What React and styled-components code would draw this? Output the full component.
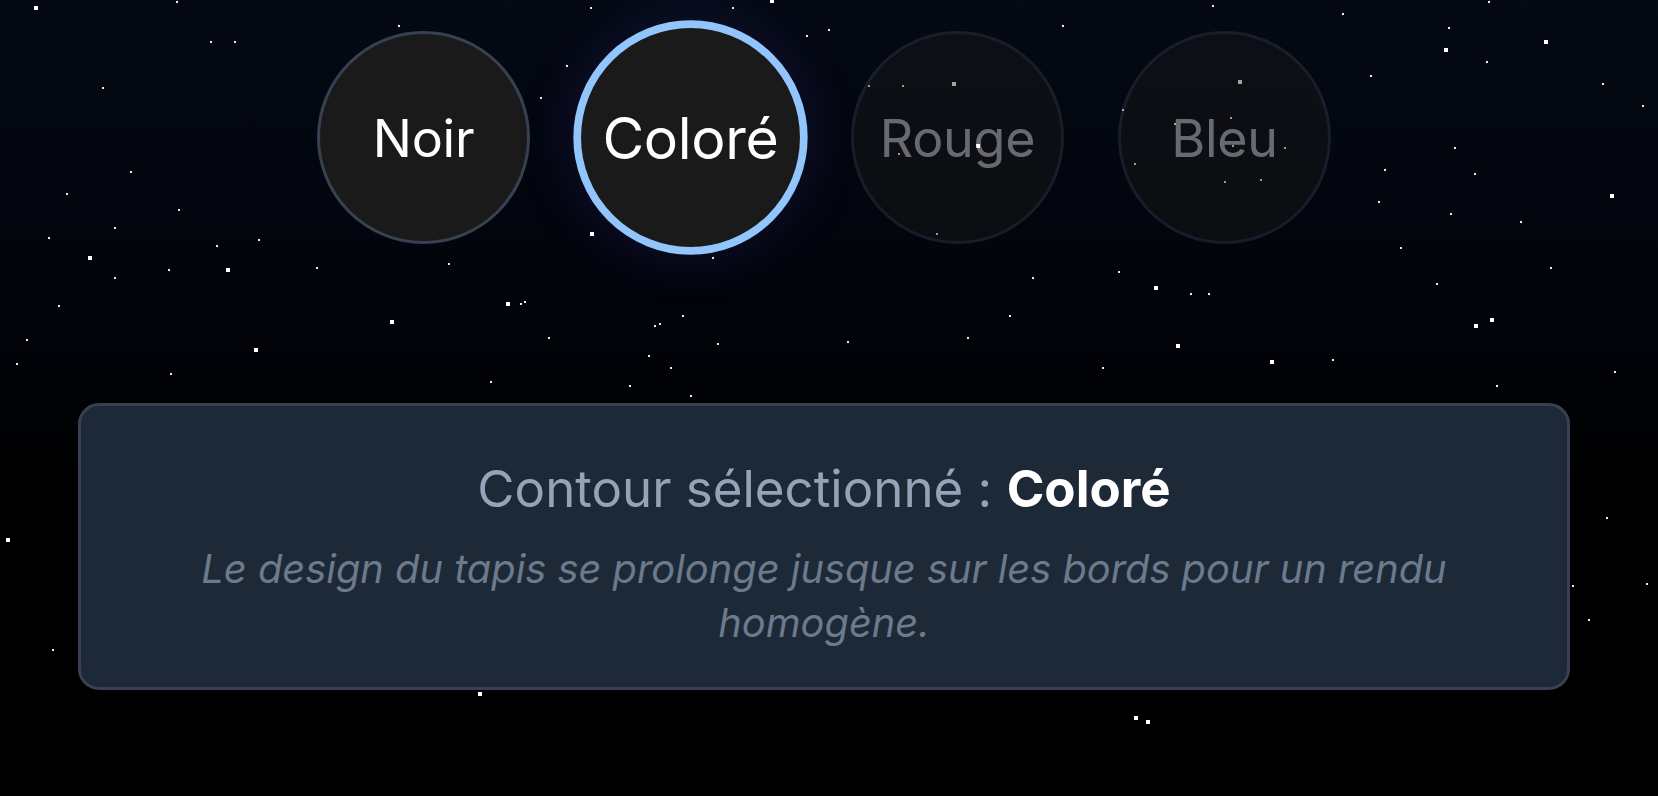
import React from 'react';
import styled, { createGlobalStyle } from 'styled-components';

const GlobalStyle = createGlobalStyle`
  html, body {
    margin: 0;
    padding: 0;
    background: #000;
    overflow: hidden;
  }
`;

const Page = styled.div`
  position: relative;
  box-sizing: border-box;
  height: 796px;
  padding: 31px 88px 0 78px;
  background: linear-gradient(to bottom, #040913 0%, #02040b 40%, #000 62%);
  font-family: Inter, 'Liberation Sans', sans-serif;
  overflow: hidden;
`;

const StarField = styled.svg`
  position: absolute;
  top: 0;
  left: 0;
  width: 1658px;
  height: 796px;
`;

const Content = styled.div`
  position: relative;
`;

const Options = styled.div`
  display: flex;
  justify-content: center;
  gap: 54px;
`;

const Option = styled.button`
  box-sizing: border-box;
  width: 213px;
  height: 213px;
  padding: 2px 0 0;
  border-radius: 50%;
  border: ${(p) => (p.$selected ? '7px solid #93c5fd' : '3px solid #374151')};
  background: #1a1a1a;
  color: #fff;
  font-family: inherit;
  font-size: 52px;
  font-weight: 400;
  letter-spacing: -0.3px;
  opacity: ${(p) => (p.$disabled ? 0.4 : 1)};
  transform: ${(p) => (p.$selected ? 'scale(1.1)' : 'none')};
  box-shadow: ${(p) => (p.$selected ? '0 0 52px rgba(80, 60, 190, 0.2)' : 'none')};
`;

const Summary = styled.div`
  box-sizing: border-box;
  height: 287px;
  margin-top: 159px;
  padding: 53px 60px 0;
  border: 3px solid #374151;
  border-radius: 21px;
  background: #1e2937;
  text-align: center;
`;

const Title = styled.p`
  margin: 0;
  color: #94a3b8;
  font-size: 51px;
  line-height: 60px;
`;

const Strong = styled.strong`
  color: #fff;
  font-weight: 700;
`;

const Note = styled.p`
  margin: 23px 0 0;
  color: #6b7a8c;
  font-size: 39.8px;
  line-height: 54px;
  font-style: italic;
`;

const bigStars = [
  [36, 8], [90, 258], [228, 270], [256, 350], [772, 1], [592, 234], [954, 84],
  [978, 146], [1240, 82], [1546, 42], [1446, 50], [1612, 196], [1492, 320],
  [1476, 326], [508, 304], [392, 322], [1156, 288], [1178, 346], [1272, 362],
  [480, 694], [1136, 718], [1148, 722], [8, 540],
];

const smallStars = [
  [177, 2], [211, 42], [235, 42], [103, 88], [131, 172], [67, 194], [179, 210],
  [115, 228], [49, 238], [259, 240], [217, 246], [169, 270], [115, 278], [59, 306],
  [27, 340], [17, 364], [171, 374], [399, 26], [591, 8], [733, 8], [807, 36],
  [829, 30], [567, 66], [541, 98], [713, 258], [317, 268], [449, 264], [1213, 6],
  [1343, 14], [1063, 26], [869, 86], [903, 86], [899, 154], [937, 234], [1371, 76],
  [1123, 110], [1175, 124], [1231, 118], [1233, 146], [1285, 148], [1135, 164],
  [1225, 182], [1261, 180], [1379, 202], [1033, 278], [1119, 272], [1489, 2],
  [1449, 28], [1487, 62], [1603, 84], [1643, 106], [1455, 148], [1385, 170],
  [1475, 174], [1451, 214], [1521, 222], [1401, 248], [1551, 268], [1437, 284],
  [1333, 360], [1615, 372], [1497, 386], [521, 304], [525, 302], [549, 338],
  [683, 316], [660, 324], [655, 326], [718, 344], [649, 356], [671, 368], [630, 386],
  [691, 396], [491, 382], [848, 342], [1010, 316], [968, 338], [1191, 294],
  [1209, 294], [1103, 368], [53, 650], [1607, 518], [1573, 586], [1647, 584],
  [1589, 620],
];

const contours = [
  { name: 'Noir' },
  { name: 'Coloré', selected: true },
  { name: 'Rouge', disabled: true },
  { name: 'Bleu', disabled: true },
];

export default function App() {
  return (
    <Page>
      <GlobalStyle />
      <StarField viewBox="0 0 1658 796">
        {bigStars.map(([x, y]) => (
          <rect key={`b${x}-${y}`} x={x - 2} y={y - 2} width="4" height="4" fill="#fff" />
        ))}
        {smallStars.map(([x, y]) => (
          <rect key={`s${x}-${y}`} x={x - 1} y={y - 1} width="2" height="2" fill="#eee" />
        ))}
      </StarField>
      <Content>
        <Options>
          {contours.map((item) => (
            <Option key={item.name} $selected={item.selected} $disabled={item.disabled}>
              {item.name}
            </Option>
          ))}
        </Options>
        <Summary>
          <Title>
            Contour sélectionné : <Strong>Coloré</Strong>
          </Title>
          <Note>Le design du tapis se prolonge jusque sur les bords pour un rendu homogène.</Note>
        </Summary>
      </Content>
    </Page>
  );
}
